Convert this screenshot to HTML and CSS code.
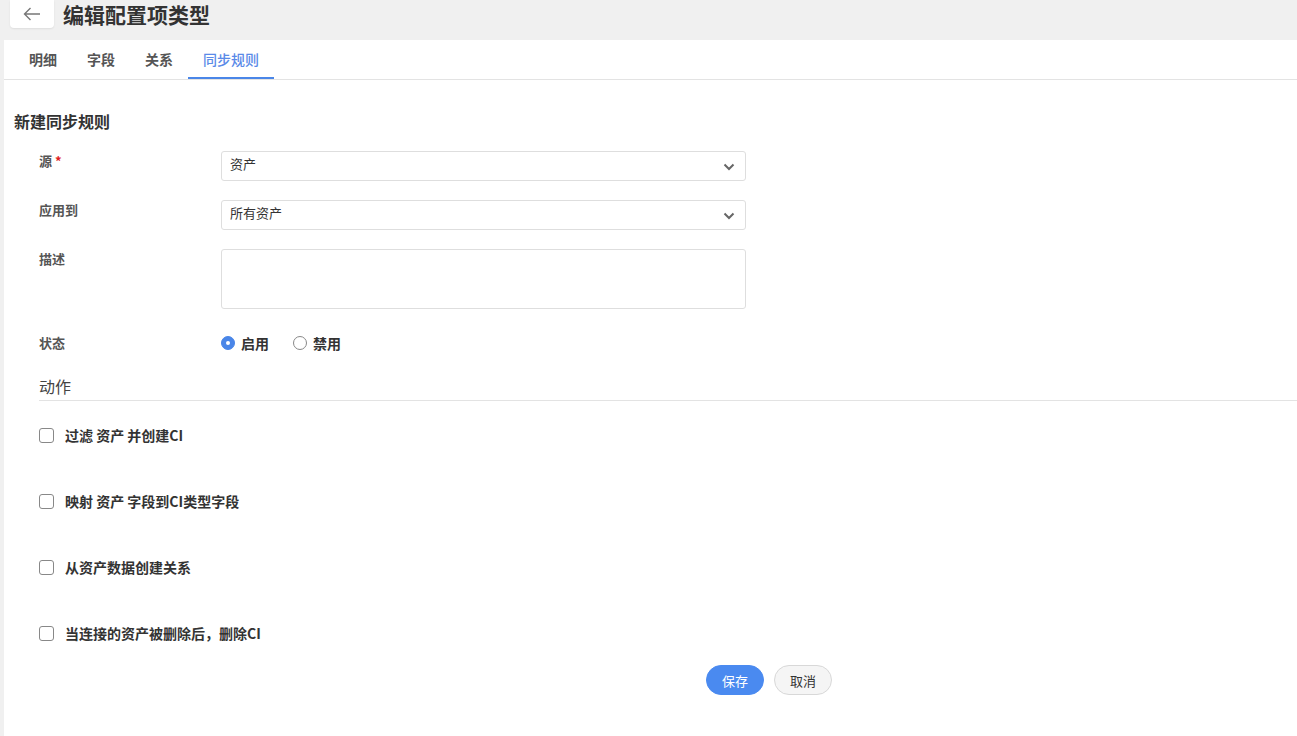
FILE: index.html
```html
<!DOCTYPE html>
<html lang="zh-CN">
<head>
    <meta charset="UTF-8">
    <title>编辑配置项类型</title>
    <link rel="stylesheet" href="styles.css">
</head>
<body>
<div class="header">
    <a class="back_btn" href="#">
        <svg width="18" height="14" viewBox="0 0 18 14"><path d="M17 7H1.5M7.5 1L1.5 7l6 6" fill="none" stroke="#777" stroke-width="1.4"/></svg>
    </a>
    <h1 class="page_title">编辑配置项类型</h1>
</div>

<div class="panel">
    <ul class="tabs">
        <li class="tab">明细</li>
        <li class="tab">字段</li>
        <li class="tab">关系</li>
        <li class="tab tab_active">同步规则</li>
    </ul>

    <h2 class="section_title">新建同步规则</h2>

    <div class="form">
        <div class="form_row">
            <label class="form_label">源<span class="required">*</span></label>
            <div class="select">
                <span>资产</span>
                <svg class="chevron" width="12" height="8" viewBox="0 0 12 8"><path d="M1.5 1.5L6 6l4.5-4.5" fill="none" stroke="#666" stroke-width="2"/></svg>
            </div>
        </div>
        <div class="form_row">
            <label class="form_label">应用到</label>
            <div class="select">
                <span>所有资产</span>
                <svg class="chevron" width="12" height="8" viewBox="0 0 12 8"><path d="M1.5 1.5L6 6l4.5-4.5" fill="none" stroke="#666" stroke-width="2"/></svg>
            </div>
        </div>
        <div class="form_row">
            <label class="form_label">描述</label>
            <div class="textarea"></div>
        </div>
        <div class="form_row form_row_radio">
            <label class="form_label">状态</label>
            <div class="radios">
                <span class="radio radio_on"></span><span class="radio_text">启用</span>
                <span class="radio"></span><span class="radio_text">禁用</span>
            </div>
        </div>
    </div>

    <div class="actions">
        <div class="actions_title">动作</div>
        <div class="check_row"><span class="checkbox"></span><span>过滤 资产 并创建CI</span></div>
        <div class="check_row"><span class="checkbox"></span><span>映射 资产 字段到CI类型字段</span></div>
        <div class="check_row"><span class="checkbox"></span><span>从资产数据创建关系</span></div>
        <div class="check_row"><span class="checkbox"></span><span>当连接的资产被删除后，删除CI</span></div>
    </div>

    <div class="buttons">
        <button class="btn btn_primary">保存</button>
        <button class="btn">取消</button>
    </div>
</div>
</body>
</html>
```

FILE: styles.css
```css
body, div, ul, li, h1, h2, p {
    margin: 0;
    padding: 0;
}
body {
    background: #f0f0f0;
    font-family: "Noto Sans CJK SC", "Liberation Sans", sans-serif;
    color: #333;
}
.header {
    height: 40px;
    display: flex;
    align-items: flex-start;
    padding-left: 10px;
}
.back_btn {
    width: 44px;
    height: 28px;
    background: #fff;
    border-radius: 0 0 4px 4px;
    box-shadow: 0 1px 2px rgba(0, 0, 0, 0.08);
    display: flex;
    align-items: center;
    justify-content: center;
}
.page_title {
    margin-left: 9px;
    font-size: 21px;
    line-height: 28px;
    font-weight: 700;
    color: #333;
}
.panel {
    margin-left: 4px;
    background: #fff;
    min-height: 696px;
}
.tabs {
    list-style: none;
    display: flex;
    padding-left: 10px;
    height: 39px;
    border-bottom: 1px solid #e3e3e3;
}
.tab {
    padding: 0 15px;
    font-size: 14px;
    font-weight: 700;
    color: #555;
    line-height: 38px;
    border-bottom: 2px solid transparent;
    height: 37px;
}
.tab_active {
    color: #5a8ae8;
    font-weight: 500;
    border-bottom-color: #4a86e8;
}
.section_title {
    margin: 29px 0 0 10px;
    font-size: 16px;
    line-height: 24px;
    font-weight: 700;
    color: #333;
}
.form {
    margin-top: 18px;
    padding-left: 35px;
    display: grid;
    row-gap: 19px;
}
.form_row {
    display: grid;
    grid-template-columns: 182px 525px;
}
.form_row_radio {
    margin-top: 5px;
}
.form_label {
    font-size: 13px;
    line-height: 20px;
    font-weight: 700;
    color: #555;
}
.required {
    color: #e02020;
    margin-left: 3px;
}
.select {
    height: 28px;
    border: 1px solid #dedede;
    border-radius: 3px;
    display: flex;
    align-items: center;
    justify-content: space-between;
    padding: 0 8px;
    font-size: 13px;
    color: #333;
}
.select span {
    margin-top: -5px;
}
.chevron {
    margin-top: 2px;
    margin-right: 2px;
}
.textarea {
    height: 58px;
    border: 1px solid #dedede;
    border-radius: 3px;
}
.radios {
    display: flex;
    align-items: center;
    height: 20px;
    font-size: 14px;
    font-weight: 700;
    color: #333;
}
.radio {
    width: 12px;
    height: 12px;
    border: 1px solid #888;
    border-radius: 50%;
    background: #fff;
}
.radio_on {
    border-color: #4a86e8;
    background: #4a86e8;
    box-shadow: inset 0 0 0 4px #4a86e8;
    position: relative;
}
.radio_on::after {
    content: "";
    position: absolute;
    left: 4px;
    top: 4px;
    width: 4px;
    height: 4px;
    border-radius: 50%;
    background: #fff;
}
.radio_text {
    margin: 0 24px 0 6px;
}
.actions {
    margin: 22px 0 0 35px;
}
.actions_title {
    font-size: 16px;
    line-height: 22px;
    color: #444;
    padding-bottom: 3px;
    border-bottom: 1px solid #e3e3e3;
}
.check_row {
    display: flex;
    align-items: center;
    height: 16px;
    margin-top: 50px;
    font-size: 14px;
    font-weight: 700;
    color: #333;
}
.check_row:first-of-type {
    margin-top: 26px;
}
.actions_title + .check_row {
    margin-top: 26px;
}
.checkbox {
    width: 13px;
    height: 13px;
    border: 1.5px solid #888;
    border-radius: 3px;
    margin-right: 11px;
}
.buttons {
    margin-top: 24px;
    padding-left: 702px;
    display: flex;
    gap: 10px;
}
.btn {
    width: 58px;
    height: 30px;
    border-radius: 15px;
    border: 1px solid #d8d8d8;
    background: #f5f5f5;
    color: #333;
    font-family: "Noto Sans CJK SC", sans-serif;
    font-size: 13px;
}
.btn_primary {
    background: #4a8af0;
    border-color: #4a8af0;
    color: #fff;
}
```
